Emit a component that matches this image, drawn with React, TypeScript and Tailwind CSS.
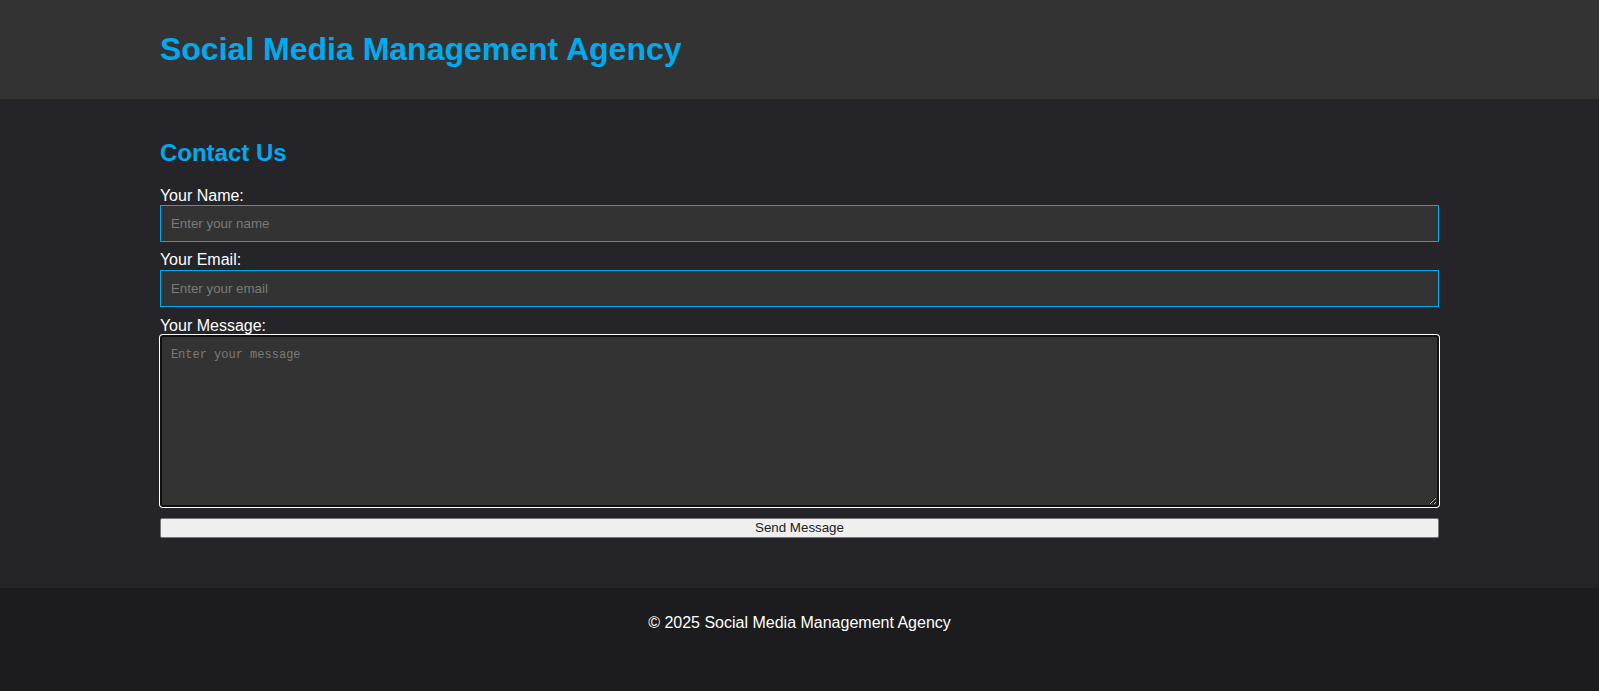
export default function App() {
  return (
    <div className="min-h-screen bg-[#1c1c1e] font-['Liberation_Sans',Arial,sans-serif] text-white">
      {/* Header */}
      <header className="bg-[#333333] py-[10px]">
        <div className="mx-auto w-[80%]">
          <h1 className="my-[21px] text-[32px] leading-[37px] font-bold text-[#00aaee]">Social Media Management Agency</h1>
        </div>
      </header>

      {/* Contact */}
      <main className="bg-[#252529] pt-[20px] pb-[50px]">
        <section className="mx-auto w-[80%]">
          <h2 className="mt-[20px] mb-[21px] text-[24px] leading-[27px] font-bold text-[#00aaee]">Contact Us</h2>
          <form onSubmit={(e) => e.preventDefault()}>
            <label className="block text-[16px] leading-[18.4px]">Your Name:</label>
            <input
              type="text"
              placeholder="Enter your name"
              className="mb-[9px] block h-[37px] w-full border border-[#00aaee] bg-[#333333] px-[10px] text-[13.33px] text-white placeholder:text-[#7a7a7a]"
            />
            <label className="block text-[16px] leading-[18.4px]">Your Email:</label>
            <input
              type="email"
              placeholder="Enter your email"
              className="mb-[10px] block h-[37px] w-full border border-[#00aaee] bg-[#333333] px-[10px] text-[13.33px] text-white placeholder:text-[#7a7a7a]"
            />
            <label className="block text-[16px] leading-[18.4px]">Your Message:</label>
            <textarea
              autoFocus
              placeholder="Enter your message"
              className="mb-[11px] block h-[172px] w-full rounded-[3px] border-2 border-[#101010] bg-[#333333] px-[9px] pt-[11px] pb-[9px] font-['Liberation_Mono',monospace] text-[12px] leading-[15px] text-white caret-white shadow-[0_0_0_1px_#ffffff] outline-none placeholder:text-[#7a7a7a]"
            />
            <button
              type="submit"
              className="block h-[20px] w-full rounded-[2px] border border-[#767676] bg-[#efefef] text-[13.33px] leading-[18px] text-[#222222]"
            >
              Send Message
            </button>
          </form>
        </section>
      </main>

      {/* Footer */}
      <footer className="bg-[#1c1c1e] py-[10px] text-center">
        <p className="my-4 text-[16px] leading-[18.4px]">© 2025 Social Media Management Agency</p>
      </footer>
    </div>
  );
}
